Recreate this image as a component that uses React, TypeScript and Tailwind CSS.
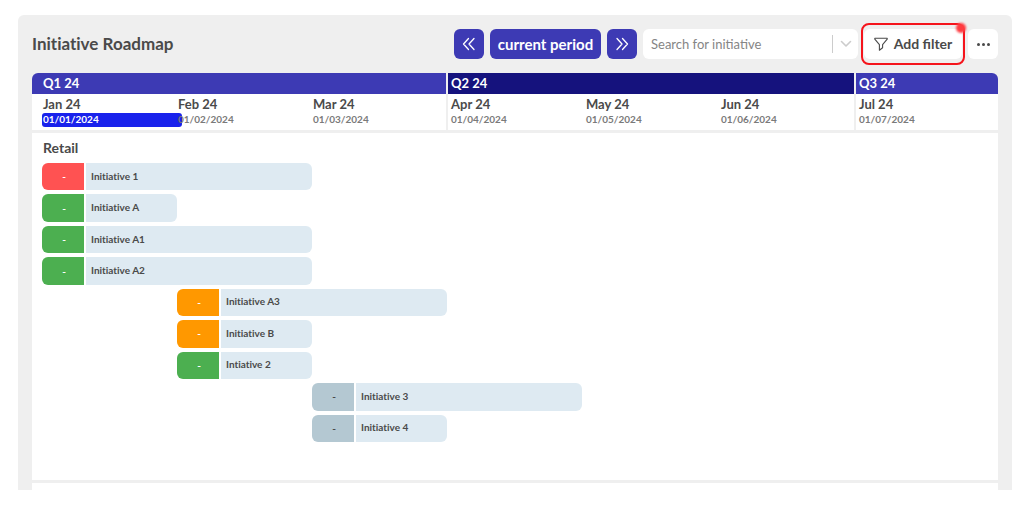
import { Fragment } from "react";

interface Month {
  label: string;
  date: string;
  current?: boolean;
}

interface Quarter {
  label: string;
  className: string;
  months: Month[];
}

interface Initiative {
  name: string;
  status: keyof typeof statusColors;
  span: string;
}

const statusColors = {
  red: "bg-[#ff5252] text-white",
  green: "bg-[#4caf50] text-white",
  orange: "bg-[#ff9800] text-white",
  grey: "bg-[#b4c8d2] text-[#4a4a4a]",
};

const quarters: Quarter[] = [
  {
    label: "Q1 24",
    className: "bg-[#3d3ab4] pl-[11px] rounded-tl-md",
    months: [
      { label: "Jan 24", date: "01/01/2024", current: true },
      { label: "Feb 24", date: "01/02/2024" },
      { label: "Mar 24", date: "01/03/2024" },
    ],
  },
  {
    label: "Q2 24",
    className: "bg-[#15127d] pl-[3px] border-l-2 border-[#efefef]",
    months: [
      { label: "Apr 24", date: "01/04/2024" },
      { label: "May 24", date: "01/05/2024" },
      { label: "Jun 24", date: "01/06/2024" },
    ],
  },
  {
    label: "Q3 24",
    className: "bg-[#3d3ab4] pl-[3px] border-l-2 border-[#efefef] rounded-tr-md",
    months: [{ label: "Jul 24", date: "01/07/2024" }],
  },
];

const initiatives: Initiative[] = [
  { name: "Initiative 1", status: "red", span: "col-start-1 col-span-2" },
  { name: "Initiative A", status: "green", span: "col-start-1 col-span-1" },
  { name: "Initiative A1", status: "green", span: "col-start-1 col-span-2" },
  { name: "Initiative A2", status: "green", span: "col-start-1 col-span-2" },
  { name: "Initiative A3", status: "orange", span: "col-start-2 col-span-2" },
  { name: "Initiative B", status: "orange", span: "col-start-2 col-span-1" },
  { name: "Intiative 2", status: "green", span: "col-start-2 col-span-1" },
  { name: "Initiative 3", status: "grey", span: "col-start-3 col-span-2" },
  { name: "Initiative 4", status: "grey", span: "col-start-3 col-span-1" },
];

function Chevrons({ flip }: { flip?: boolean }) {
  return (
    <svg
      viewBox="0 0 14 14"
      className={flip ? "w-3.5 h-3.5 rotate-180" : "w-3.5 h-3.5"}
      fill="none"
      stroke="currentColor"
      strokeWidth="1.3"
      strokeLinecap="round"
      strokeLinejoin="round"
    >
      <path d="M6.5 1.5 1.500 7l5 5.500M12 1.500 7 7l5 5.500" />
    </svg>
  );
}

function Toolbar() {
  return (
    <div className="flex items-center gap-1.5">
      <button aria-label="Previous period" className="w-[30px] h-[30px] flex items-center justify-center rounded-md bg-[#3d3ab4] text-white">
        <Chevrons />
      </button>
      <button className="w-[111px] h-[30px] rounded-md bg-[#3d3ab4] text-white text-[15px] font-bold whitespace-nowrap">
        current period
      </button>
      <button aria-label="Next period" className="w-[30px] h-[30px] flex items-center justify-center rounded-md bg-[#3d3ab4] text-white">
        <Chevrons flip />
      </button>
      <div className="w-[215px] h-[30px] flex items-center rounded-md bg-white">
        <input
          type="text"
          aria-label="Search for initiative"
          placeholder="Search for initiative"
          className="flex-1 min-w-0 h-full pl-2 text-[13px] bg-transparent outline-none placeholder:text-[#858585]"
        />
        <span className="w-px h-[18px] bg-[#cccccc]" />
        <button aria-label="Show initiatives" className="w-[25px] h-full flex items-center justify-center text-[#cccccc]">
          <svg viewBox="0 0 12 8" className="w-3 h-2" fill="none" stroke="currentColor" strokeWidth="1.600" strokeLinecap="round" strokeLinejoin="round">
            <path d="M1.500 1.500 6 6l4.500-4.500" />
          </svg>
        </button>
      </div>
      <div className="relative">
        <button className="w-[98px] h-[30px] flex items-center justify-center gap-1.5 rounded-md bg-white text-sm font-bold whitespace-nowrap">
          <svg viewBox="0 0 14 14" className="w-3.5 h-3.5" fill="none" stroke="currentColor" strokeWidth="1.100" strokeLinejoin="round">
            <path d="M.8 1.200h12.400v1L8.600 7.600v3.200l-3.200 2.400V7.600L.8 2.200z" />
          </svg>
          Add filter
        </button>
        <span className="absolute -inset-x-[3px] -inset-y-[6px] rounded-lg border-2 border-[#f5141c] pointer-events-none" />
        <span className="absolute -top-1.5 -right-1 w-2.5 h-2.5 rounded-full bg-[#ff3b40] blur-[1px] pointer-events-none" />
      </div>
      <button aria-label="More options" className="w-[30px] h-[30px] flex items-center justify-center gap-[2px] rounded-md bg-white">
        <span className="w-[3px] h-[3px] rounded-full bg-[#4a4a4a]" />
        <span className="w-[3px] h-[3px] rounded-full bg-[#4a4a4a]" />
        <span className="w-[3px] h-[3px] rounded-full bg-[#4a4a4a]" />
      </button>
    </div>
  );
}

function MonthCell({ month }: { month: Month }) {
  return (
    <div className="min-w-0 whitespace-nowrap">
      <div className="h-[18px] text-[13px] leading-[18px] font-bold">{month.label}</div>
      {month.current ? (
        <div className="-ml-px -mr-[6px] h-3.5 rounded-[3px] bg-[#1922ec] pl-px text-[10px] leading-[13px] font-bold text-white">
          {month.date}
        </div>
      ) : (
        <div className="relative h-3.5 text-[10px] leading-[13px] font-bold text-[#7a7a7a]">{month.date}</div>
      )}
    </div>
  );
}

function TimelineHeader() {
  return (
    <div className="grid grid-cols-[414fr_408fr_144fr] grid-rows-[21px_36px] grid-flow-col border-b-3 border-[#efefef]">
      {quarters.map((quarter, i) => (
        <Fragment key={quarter.label}>
          <div className={`${quarter.className} text-[13px] leading-[21px] font-bold text-white`}>{quarter.label}</div>
          <div
            className={`${i === 0 ? "pl-[11px]" : "border-l-2 border-[#efefef] pl-[3px]"} ${
              quarter.months.length === 3 ? "grid-cols-3" : "grid-cols-1"
            } grid gap-x-0.5 content-start bg-white pt-px`}
          >
            {quarter.months.map((month) => (
              <MonthCell key={month.label} month={month} />
            ))}
          </div>
        </Fragment>
      ))}
    </div>
  );
}

function InitiativeRow({ initiative }: { initiative: Initiative }) {
  return (
    <div className="flex-1 grid grid-cols-[repeat(7,135fr)_11fr]">
      <div className={`${initiative.span} flex gap-0.5 rounded-md overflow-hidden text-[10px] font-bold`}>
        <div className={`${statusColors[initiative.status]} w-[42px] pl-0.5 flex items-center justify-center`}>-</div>
        <div className="flex-1 flex items-center bg-[#deeaf2] pl-[5px] pb-px whitespace-nowrap [font-variant-ligatures:none]">
          {initiative.name}
        </div>
      </div>
    </div>
  );
}

export default function App() {
  return (
    <div className="bg-white pt-[15px] pl-[18px] pr-3 font-['Lato',sans-serif] text-[#4a4a4a]">
      <main className="rounded-t-md bg-[#efefef] px-3.5 pt-3.5">
        <header className="flex items-center justify-between mb-3.5">
          <h1 className="text-[17px] leading-6 font-bold [font-variant-ligatures:none]">Initiative Roadmap</h1>
          <Toolbar />
        </header>
        <TimelineHeader />
        <section className="bg-white pl-2.5 pt-[5px] pb-[38px]">
          <h2 className="pl-px h-[25px] text-sm leading-5 font-bold">Retail</h2>
          <div className="h-[279px] flex flex-col gap-1">
            {initiatives.map((initiative) => (
              <InitiativeRow key={initiative.name} initiative={initiative} />
            ))}
          </div>
        </section>
        <div className="h-2.5 border-t-3 border-[#efefef] bg-white" />
      </main>
    </div>
  );
}
